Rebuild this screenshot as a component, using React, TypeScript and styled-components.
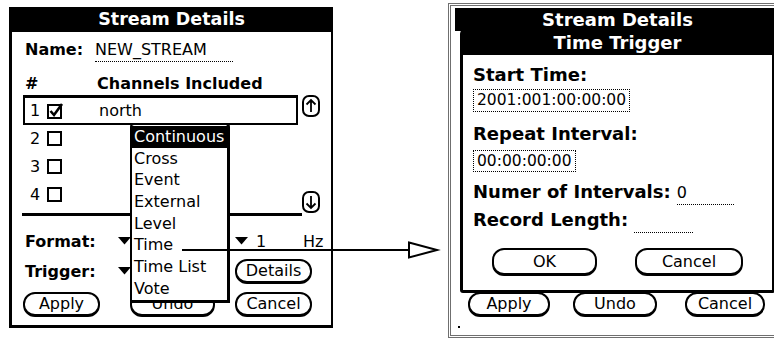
import React from "react";
import styled, { createGlobalStyle } from "styled-components";

const GlobalStyle = createGlobalStyle`
  html, body { margin: 0; padding: 0; background: #fff; }
  body {
    width: 774px; height: 339px; overflow: hidden;
    font-family: "DejaVu Sans", "Liberation Sans", sans-serif;
    color: #000;
  }
`;

const Page = styled.div`
  position: relative;
  width: 774px;
  height: 339px;
  overflow: hidden;
  display: flex;
  align-items: flex-start;
`;

/* ---------- shared bits ---------- */

const TitleBar = styled.div<{ $h: number; $fs: number }>`
  flex: none;
  height: ${(p) => p.$h}px;
  line-height: ${(p) => p.$h}px;
  background: #000;
  color: #fff;
  font-weight: bold;
  font-size: ${(p) => p.$fs}px;
  text-align: center;
  white-space: nowrap;
`;

const Label = styled.span<{ $w?: number; $fs?: number }>`
  display: inline-block;
  font-weight: bold;
  font-size: ${(p) => p.$fs ?? 16}px;
  white-space: nowrap;
  ${(p) => (p.$w ? `width: ${p.$w}px;` : "")}
`;

const Text = styled.span`
  font-size: 16px;
  white-space: nowrap;
`;

const Field = styled.span<{ $w: number; $ml?: number }>`
  display: inline-block;
  box-sizing: border-box;
  width: ${(p) => p.$w}px;
  margin-left: ${(p) => p.$ml ?? 0}px;
  font-size: 16px;
  border-bottom: 1px dotted #000;
  white-space: nowrap;
`;

const Pill = styled.div<{ $w: number; $h?: number; $ml?: number }>`
  flex: none;
  box-sizing: border-box;
  width: ${(p) => p.$w}px;
  height: ${(p) => p.$h ?? 25}px;
  margin-left: ${(p) => p.$ml ?? 0}px;
  border: 2px solid #000;
  border-bottom-width: 3px;
  border-radius: 12px;
  background: #fff;
  display: flex;
  align-items: center;
  justify-content: center;
  font-size: 16px;
  line-height: 1;
`;

/* ---------- left screen ---------- */

const LeftScreen = styled.div`
  position: relative;
  flex: none;
  box-sizing: border-box;
  margin: 7px 0 0 9px;
  width: 324px;
  height: 321px;
  border-style: solid;
  border-color: #000;
  border-width: 0 2px 3px 3px;
  display: flex;
  flex-direction: column;
`;

const LineRow = styled.div<{ $mt: number }>`
  display: flex;
  align-items: baseline;
  height: 22px;
  line-height: 22px;
  margin-top: ${(p) => p.$mt}px;
  padding-left: 13px;
`;

const TableWrap = styled.div`
  display: flex;
  margin-left: 10px;
`;

const TableBody = styled.div`
  width: 280px;
  padding-bottom: 4px;
  border-bottom: 3px solid #000;
`;

const Row = styled.div<{ $framed?: boolean }>`
  box-sizing: border-box;
  margin-left: 1px;
  width: 275px;
  height: ${(p) => (p.$framed ? 30 : 28)}px;
  border: 2px solid ${(p) => (p.$framed ? "#000" : "transparent")};
  border-top-width: ${(p) => (p.$framed ? 3 : 0)}px;
  display: flex;
  align-items: center;
  padding-left: 5px;
`;

const RowNum = styled.span`
  width: 17px;
  font-size: 16px;
`;

const RowName = styled.span`
  margin-left: 34px;
  font-size: 16px;
`;

const ScrollCol = styled.div`
  width: 18px;
  height: 118px;
  display: flex;
  flex-direction: column;
  justify-content: space-between;
`;

const FieldGrid = styled.div<{ $h: number; $mt: number }>`
  display: grid;
  grid-template-columns: 93px 117px 68px 1fr;
  align-items: center;
  height: ${(p) => p.$h}px;
  margin-top: ${(p) => p.$mt}px;
  padding-left: 13px;
`;

const Inline = styled.div`
  display: flex;
  align-items: center;
  gap: 8px;
`;

const ButtonRow = styled.div<{ $pl: number; $mt: number }>`
  display: flex;
  margin-top: ${(p) => p.$mt}px;
  padding-left: ${(p) => p.$pl}px;
`;

const Popup = styled.div`
  position: absolute;
  left: 118px;
  top: 116px;
  width: 100px;
  box-sizing: border-box;
  border: 2px solid #000;
  border-right-width: 3px;
  border-bottom-width: 3px;
  border-radius: 4px 4px 0 0;
  background: #fff;
  padding-top: 1px;
  z-index: 2;
`;

const PopupItem = styled.div<{ $sel?: boolean }>`
  height: 21.7px;
  line-height: 21.7px;
  padding-left: 2px;
  font-size: 16px;
  white-space: nowrap;
  background: ${(p) => (p.$sel ? "#000" : "#fff")};
  color: ${(p) => (p.$sel ? "#fff" : "#000")};
`;

const Connector = styled.svg`
  position: absolute;
  left: 180px;
  top: 240px;
  z-index: 5;
`;

/* ---------- right screen ---------- */

const RightScreen = styled.div`
  position: relative;
  flex: none;
  box-sizing: border-box;
  margin: 3px 0 0 115px;
  width: 340px;
  height: 335px;
  border: 3px double #6f6f6f;
  padding: 2px 5px 0 4px;
  display: flex;
  flex-direction: column;
`;

const Spacer = styled.div`
  flex: 1;
`;

const BottomStrip = styled.div`
  height: 18px;
  display: flex;
  align-items: center;
`;

const Dot = styled.span`
  width: 2px;
  height: 2px;
  margin-left: 3px;
  margin-top: 2px;
  background: #000;
`;

const Dialog = styled.div`
  position: absolute;
  left: 9px;
  top: 22px;
  width: 315px;
  height: 265px;
  box-sizing: border-box;
  border: 3px solid #000;
  border-radius: 6px 6px 3px 3px;
  background: #fff;
  z-index: 2;
  display: flex;
  flex-direction: column;
`;

const DialogBody = styled.div`
  display: flex;
  flex-direction: column;
  align-items: flex-start;
  padding: 9px 0 0 10px;
`;

const DLine = styled.div<{ $mt?: number }>`
  display: flex;
  align-items: baseline;
  height: 22px;
  line-height: 22px;
  margin-top: ${(p) => p.$mt ?? 0}px;
`;

const DotBox = styled.div<{ $h: number; $mt: number }>`
  box-sizing: border-box;
  height: ${(p) => p.$h}px;
  line-height: ${(p) => p.$h - 2}px;
  margin-top: ${(p) => p.$mt}px;
  padding: 0 3px;
  border: 1px dotted #000;
  font-size: 15.5px;
  white-space: nowrap;
`;

/* ---------- drawings ---------- */

const ScrollArrow = ({ up }: { up?: boolean }) => (
  <svg width="18" height="22" viewBox="0 0 18 22">
    <rect x="1" y="1" width="16" height="20" rx="6" fill="#fff" stroke="#000" strokeWidth="2" />
    {up ? (
      <path d="M9 17V5M4.5 9.5L9 5l4.5 4.5" fill="none" stroke="#000" strokeWidth="1.8" />
    ) : (
      <path d="M9 5v12M4.5 12.5L9 17l4.5-4.5" fill="none" stroke="#000" strokeWidth="1.8" />
    )}
  </svg>
);

const CheckBox = ({ checked }: { checked?: boolean }) => (
  <svg width="18" height="16" viewBox="0 0 18 16">
    <rect x="1" y="2" width="13" height="13" fill="none" stroke="#000" strokeWidth="2" />
    {checked && <path d="M3.5 8l3.5 4L15 1" fill="none" stroke="#000" strokeWidth="2.6" />}
  </svg>
);

const DropTri = () => (
  <svg width="13" height="8" viewBox="0 0 13 8">
    <polygon points="0,0 13,0 6.5,7.5" fill="#000" />
  </svg>
);

const items = ["Continuous", "Cross", "Event", "External", "Level", "Time", "Time List", "Vote"];

export default function App() {
  return (
    <Page>
      <GlobalStyle />
      <LeftScreen>
        <TitleBar $h={25} $fs={17.5}>Stream Details</TitleBar>
        <LineRow $mt={7}>
          <Label $w={70}>Name:</Label>
          <Field $w={138}>NEW_STREAM</Field>
        </LineRow>
        <LineRow $mt={12}>
          <Label $w={72}>#</Label>
          <Label>Channels Included</Label>
        </LineRow>
        <TableWrap>
          <TableBody>
            <Row $framed>
              <RowNum>1</RowNum>
              <CheckBox checked />
              <RowName>north</RowName>
            </Row>
            {[2, 3, 4].map((n) => (
              <Row key={n}>
                <RowNum>{n}</RowNum>
                <CheckBox />
              </Row>
            ))}
          </TableBody>
          <ScrollCol>
            <ScrollArrow up />
            <ScrollArrow />
          </ScrollCol>
        </TableWrap>
        <FieldGrid $h={22} $mt={14}>
          <Label>Format:</Label>
          <DropTri />
          <Inline>
            <DropTri />
            <Text>1</Text>
          </Inline>
          <Text>Hz</Text>
        </FieldGrid>
        <FieldGrid $h={26} $mt={6}>
          <Label>Trigger:</Label>
          <DropTri />
          <Pill $w={77}>Details</Pill>
        </FieldGrid>
        <ButtonRow $pl={11} $mt={8}>
          <Pill $w={77}>Apply</Pill>
          <Pill $w={85} $ml={30}>Undo</Pill>
          <Pill $w={77} $ml={20}>Cancel</Pill>
        </ButtonRow>
        <Popup>
          {items.map((it, i) => (
            <PopupItem key={it} $sel={i === 0}>
              {it}
            </PopupItem>
          ))}
        </Popup>
      </LeftScreen>

      <RightScreen>
        <TitleBar $h={23} $fs={18}>Stream Details</TitleBar>
        <Spacer />
        <ButtonRow $pl={13} $mt={0}>
          <Pill $w={82}>Apply</Pill>
          <Pill $w={84} $ml={23}>Undo</Pill>
          <Pill $w={80} $ml={28}>Cancel</Pill>
        </ButtonRow>
        <BottomStrip>
          <Dot />
        </BottomStrip>
        <Dialog>
          <TitleBar $h={24} $fs={18}>Time Trigger</TitleBar>
          <DialogBody>
            <DLine>
              <Label $fs={18}>Start Time:</Label>
            </DLine>
            <DotBox $h={23} $mt={3}>2001:001:00:00:00</DotBox>
            <DLine $mt={11}>
              <Label $fs={18}>Repeat Interval:</Label>
            </DLine>
            <DotBox $h={22} $mt={5}>00:00:00:00</DotBox>
            <DLine $mt={9}>
              <Label $fs={18}>Numer of Intervals:</Label>
              <Field $w={57} $ml={6}>0</Field>
            </DLine>
            <DLine $mt={6}>
              <Label $fs={18}>Record Length:</Label>
              <Field $w={59} $ml={6}>&nbsp;</Field>
            </DLine>
            <ButtonRow $pl={19} $mt={17}>
              <Pill $w={105} $h={28}>OK</Pill>
              <Pill $w={108} $h={28} $ml={38}>Cancel</Pill>
            </ButtonRow>
          </DialogBody>
        </Dialog>
      </RightScreen>

      <Connector width="262" height="20" viewBox="0 0 262 20">
        <line x1="2" y1="10" x2="229" y2="10" stroke="#000" strokeWidth="2" />
        <polygon points="229,2.5 257,10 229,17.5" fill="#fff" stroke="#000" strokeWidth="2" />
      </Connector>
    </Page>
  );
}
